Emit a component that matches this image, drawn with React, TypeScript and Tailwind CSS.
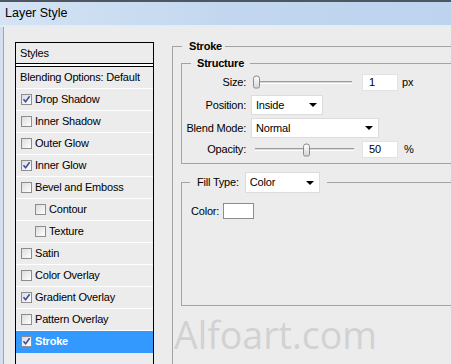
import React from 'react';

const font = { fontFamily: '"Liberation Sans", Arial, sans-serif' };

type Item = { label: string; checked?: boolean; indent?: boolean; active?: boolean };

const items: Item[] = [
  { label: 'Drop Shadow', checked: true },
  { label: 'Inner Shadow' },
  { label: 'Outer Glow' },
  { label: 'Inner Glow', checked: true },
  { label: 'Bevel and Emboss' },
  { label: 'Contour', indent: true },
  { label: 'Texture', indent: true },
  { label: 'Satin' },
  { label: 'Color Overlay' },
  { label: 'Gradient Overlay', checked: true },
  { label: 'Pattern Overlay' },
  { label: 'Stroke', checked: true, active: true },
];

const CheckBox = ({ checked }: { checked?: boolean }) => (
  <span className="w-[11px] h-[11px] shrink-0 border border-[#8d8d8d] bg-gradient-to-br from-[#dcdcdc] to-white flex items-center justify-center">
    {checked && (
      <svg width="9" height="9" viewBox="0 0 9 9">
        <path d="M1.5 4.2 L3.6 6.8 L7.6 1.2" fill="none" stroke="#3a4c9e" strokeWidth="1.5" />
      </svg>
    )}
  </span>
);

const Select = ({ value, width }: { value: string; width: string }) => (
  <div className={`${width} h-full bg-white border border-[#dcdcdc] flex items-center justify-between pl-[4px] pr-[5px]`}>
    <span>{value}</span>
    <span className="w-0 h-0 border-l-[4px] border-r-[4px] border-t-[4px] border-l-transparent border-r-transparent border-t-black" />
  </div>
);

const Slider = ({ pos, ml }: { pos: number; ml: string }) => (
  <div className={`relative w-[99px] h-full flex items-center ${ml}`}>
    <div className="w-full h-[3px] border-t border-[#9c9c9c] border-b border-b-white bg-[#d8d8d8]" />
    <div
      className="absolute top-1/2 -translate-y-1/2 w-[7px] h-[13px] rounded-t-[3px] rounded-b-[2px] border border-[#8a8a8a] bg-gradient-to-b from-white to-[#d6d6d6]"
      style={{ left: pos }}
    />
  </div>
);

export default function App() {
  return (
    <div className="w-[451px] h-[364px] overflow-hidden bg-[#ececec] flex flex-col text-[11px] text-black tracking-[-0.2px]" style={font}>
      {/* title bar */}
      <div className="h-[27px] shrink-0 border-t-2 border-[#4e5661] border-b-2 border-b-[#e4ecf6] bg-gradient-to-r from-[#d5e3f4] via-[#c2d7ef] to-[#bdd3ee] flex items-center pl-[5px]">
        <span className="text-[12.5px] tracking-normal">Layer Style</span>
      </div>

      <div className="flex flex-1 min-h-0">
        <div className="w-[3px] shrink-0 bg-[#d3dfee]" />
        <div className="w-px shrink-0 bg-[#9aa5b2]" />

        {/* styles list */}
        <div className="ml-[11px] mt-[15px] w-[139px] h-[400px] shrink-0 border border-black flex flex-col">
          <div className="h-[21px] shrink-0 flex items-center pl-[4px] border-b border-black">Styles</div>
          <div className="h-[2px] shrink-0 bg-white" />
          <div className="h-[23px] shrink-0 flex items-center pl-[4px] border-t border-black border-b border-b-white">Blending Options: Default</div>
          {items.map((it) => (
            <div
              key={it.label}
              className={`h-[22px] shrink-0 flex items-center gap-[3px] border-b ${
                it.active ? 'bg-[#3399ff] text-white font-bold border-[#3399ff]' : 'border-white'
              } ${it.indent ? 'pl-[19px]' : 'pl-[5px]'}`}
            >
              <CheckBox checked={it.checked} />
              <span>{it.label}</span>
            </div>
          ))}
        </div>

        {/* stroke group */}
        <fieldset className="ml-[18px] mt-[13px] w-[320px] h-[400px] shrink-0 border border-[#a3a3a3]">
          <legend className="ml-[9px] pl-[7px] pr-[3px] font-bold leading-[13px]">Stroke</legend>

          <fieldset className="ml-[8px] mt-[4px] w-[300px] border border-[#a3a3a3] pb-[5px]">
            <legend className="ml-[9px] px-[6px] font-bold leading-[13px]">Structure</legend>

            <div className="flex items-center h-[18px] mt-[3px]">
              <span className="w-[64px] text-right">Size:</span>
              <Slider pos={0} ml="ml-[7px]" />
              <div className="ml-[10px] w-[36px] h-[17px] bg-white border border-[#e2e2e2] flex items-center pl-[6px]">1</div>
              <span className="ml-[4px]">px</span>
            </div>

            <div className="flex items-center h-[20px] mt-[4px]">
              <span className="w-[64px] text-right">Position:</span>
              <div className="ml-[5px] h-full">
                <Select value="Inside" width="w-[72px]" />
              </div>
            </div>

            <div className="flex items-center h-[20px] mt-[3px]">
              <span className="w-[64px] text-right">Blend Mode:</span>
              <div className="ml-[5px] h-full">
                <Select value="Normal" width="w-[128px]" />
              </div>
            </div>

            <div className="flex items-center h-[17px] mt-[3px]">
              <span className="w-[64px] text-right">Opacity:</span>
              <Slider pos={48} ml="ml-[9px]" />
              <div className="ml-[8px] w-[36px] h-[17px] bg-white border border-[#e2e2e2] flex items-center pl-[6px]">50</div>
              <span className="ml-[6px]">%</span>
            </div>
          </fieldset>

          <fieldset className="ml-[8px] mt-[8px] w-[300px] h-[134px] border border-[#a3a3a3]">
            <legend className="ml-[8px] px-[7px]">
              <span className="inline-flex items-center gap-[6px] h-[21px]">
                <span>Fill Type:</span>
                <span className="h-[21px] inline-block">
                  <Select value="Color" width="w-[75px]" />
                </span>
              </span>
            </legend>
            <div className="flex items-center mt-[10px] pl-[9px] gap-[4px]">
              <span>Color:</span>
              <div className="w-[31px] h-[16px] bg-white border border-[#8c8c8c]" />
            </div>
          </fieldset>

          <div
            className="ml-[1px] mt-[10px] text-[37.5px] leading-none text-[#d2d2d2] tracking-normal"
            style={{ fontFamily: '"Open Sans", sans-serif' }}
          >
            Alfoart.com
          </div>
        </fieldset>
      </div>
    </div>
  );
}
